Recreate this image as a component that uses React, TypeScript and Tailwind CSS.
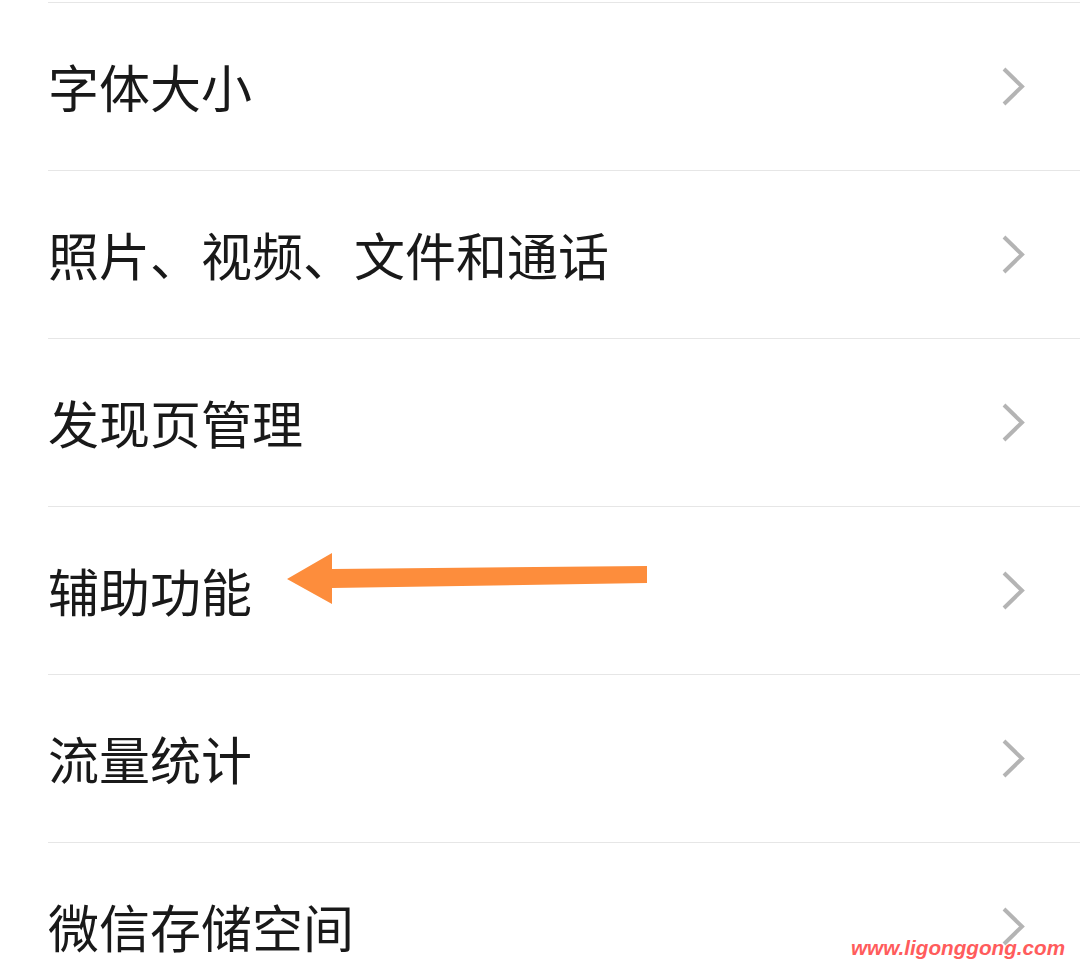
import React from "react";

const items = [
  "字体大小",
  "照片、视频、文件和通话",
  "发现页管理",
  "辅助功能",
  "流量统计",
  "微信存储空间",
];

const Chevron: React.FC = () => (
  <svg width="26" height="42" viewBox="0 0 26 42" className="shrink-0">
    <polyline
      points="3,3 21,20.5 3,38"
      fill="none"
      stroke="#b4b4b4"
      strokeWidth="4"
      strokeLinecap="butt"
      strokeLinejoin="miter"
    />
  </svg>
);

const App: React.FC = () => {
  return (
    <div
      className="relative w-[1080px] h-[975px] overflow-hidden bg-white pt-[2px]"
      style={{ fontFamily: '"Noto Sans CJK SC", "Noto Sans", sans-serif' }}
    >
      {/* ================= LIST ================= */}
      <div className="flex flex-col">
        {items.map((label) => (
          <div
            key={label}
            className="ml-12 h-[168px] border-t border-[#e6e6e6] flex items-center justify-between pr-[53px]"
          >
            <span className="text-[51px] leading-none text-[#191919]">{label}</span>
            <Chevron />
          </div>
        ))}
      </div>

      {/* annotation arrow */}
      <svg
        className="absolute left-0 top-0 pointer-events-none"
        width="1080"
        height="975"
        viewBox="0 0 1080 975"
      >
        <polygon
          points="287,579 332,553 332,569 647,566 647,583 332,588 332,604"
          fill="#fd8d3c"
        />
      </svg>

      {/* watermark */}
      <div
        className="absolute left-[851px] top-[938px] text-[20.7px] font-bold italic text-[#ff5c5c] leading-none"
        style={{ fontFamily: '"Liberation Sans", Arial, sans-serif' }}
      >
        www.ligonggong.com
      </div>
    </div>
  );
};

export default App;
